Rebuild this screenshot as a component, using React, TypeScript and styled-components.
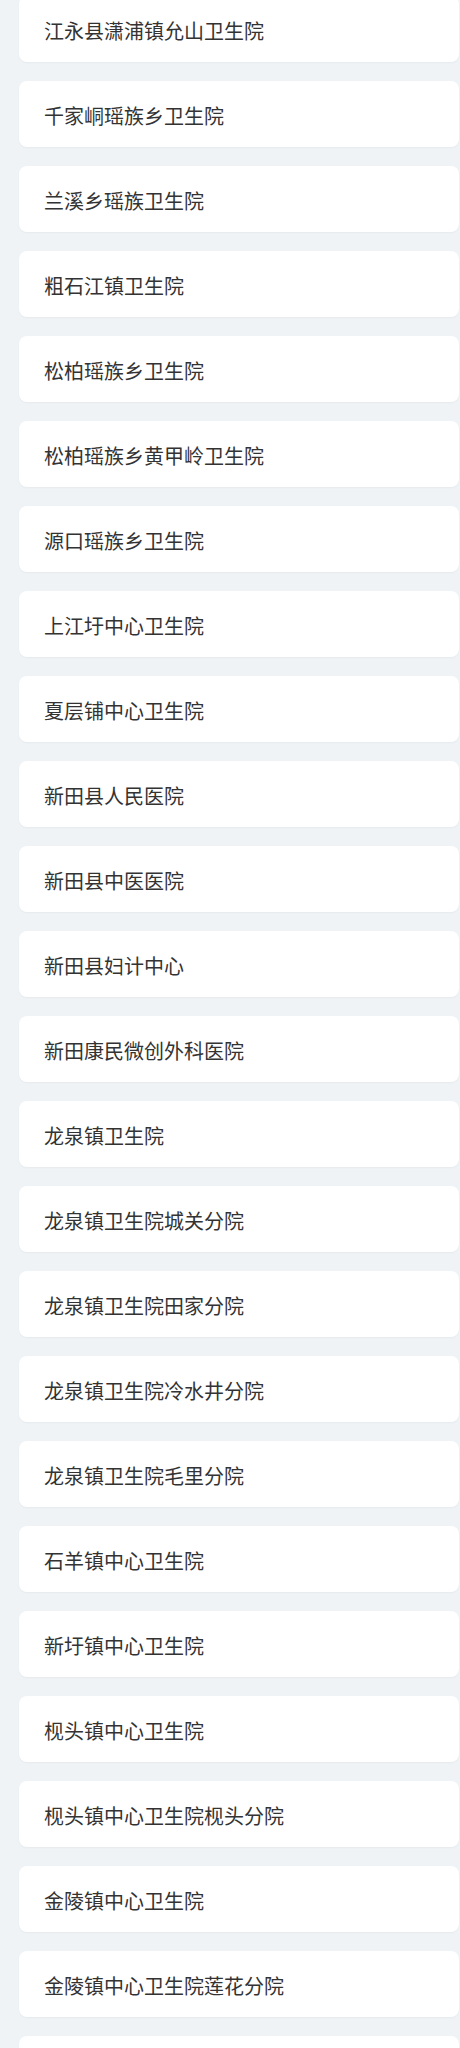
import React from "react";
import styled, { createGlobalStyle } from "styled-components";

const hospitals = [
  "江永县潇浦镇允山卫生院",
  "千家峒瑶族乡卫生院",
  "兰溪乡瑶族卫生院",
  "粗石江镇卫生院",
  "松柏瑶族乡卫生院",
  "松柏瑶族乡黄甲岭卫生院",
  "源口瑶族乡卫生院",
  "上江圩中心卫生院",
  "夏层铺中心卫生院",
  "新田县人民医院",
  "新田县中医医院",
  "新田县妇计中心",
  "新田康民微创外科医院",
  "龙泉镇卫生院",
  "龙泉镇卫生院城关分院",
  "龙泉镇卫生院田家分院",
  "龙泉镇卫生院冷水井分院",
  "龙泉镇卫生院毛里分院",
  "石羊镇中心卫生院",
  "新圩镇中心卫生院",
  "枧头镇中心卫生院",
  "枧头镇中心卫生院枧头分院",
  "金陵镇中心卫生院",
  "金陵镇中心卫生院莲花分院",
  "",
];

const GlobalStyle = createGlobalStyle`
  html, body {
    margin: 0;
    padding: 0;
    background: #eff3f6;
    font-family: "Noto Sans CJK SC", "Noto Sans", sans-serif;
  }
`;

export default function App() {
  return (
    <>
      <GlobalStyle />
      <Page>
        <List>
          {hospitals.map((name, i) => (
            <Card key={i}>{name}</Card>
          ))}
        </List>
      </Page>
    </>
  );
}

const Page = styled.div`
  height: 2048px;
  overflow: hidden;
  background: #eff3f6;
`;

const List = styled.div`
  display: flex;
  flex-direction: column;
  gap: 19px;
  margin-top: -4px;
  padding: 0 1px 0 19px;
`;

const Card = styled.div`
  height: 66px;
  display: flex;
  align-items: center;
  padding: 2px 0 0 25px;
  box-sizing: border-box;
  background: #ffffff;
  border-radius: 8px;
  box-shadow: 0 1px 2px rgba(0, 0, 0, 0.04);
  font-size: 20px;
  color: #333333;
  flex-shrink: 0;
`;
